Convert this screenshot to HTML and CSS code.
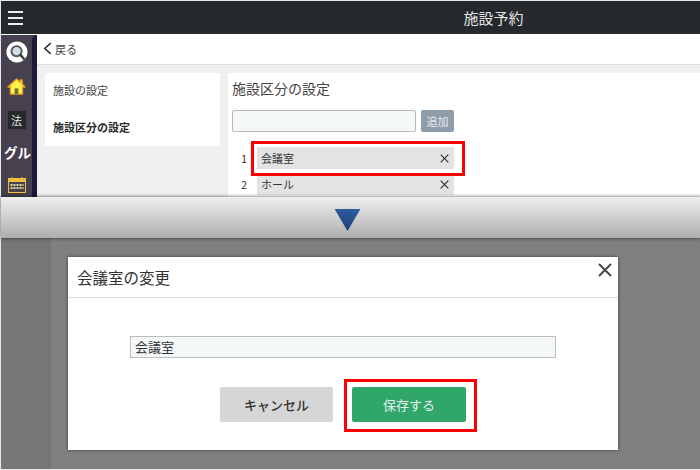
FILE: index.html
```html
<!DOCTYPE html>
<html lang="ja">
<head>
<meta charset="utf-8">
<title>施設予約</title>
<link rel="stylesheet" href="styles.css">
</head>
<body>
<div class="shot">
  <section class="app">
    <header class="topbar">
      <div class="burger"><span></span><span></span><span></span></div>
      <div class="title">施設予約</div>
    </header>
    <div class="app-body">
      <nav class="side">
        <div class="side-items">
          <svg class="ic-search" viewBox="0 0 26 26"><circle cx="13" cy="13" r="12.5" fill="#fff"/><circle cx="12.5" cy="12" r="6" fill="#cfe0ea" stroke="#555" stroke-width="2.2"/><path d="M17 16.5l4 4.5" stroke="#444" stroke-width="3" stroke-linecap="round"/></svg>
          <svg class="ic-home" viewBox="0 0 20 18"><path d="M10 1L1 9.500h2.600V17h12.800V9.500H19l-3-2.900V2h-2v2.700z" fill="#fff24d" stroke="#e9a21b" stroke-width="1.400" stroke-linejoin="round"/><rect x="8" y="11" width="4" height="6" fill="#7a6a3a"/></svg>
          <div class="ic-law">法</div>
          <div class="ic-group">グル</div>
          <svg class="ic-cal" viewBox="0 0 18 16"><rect x=".5" y="1.500" width="17" height="14" fill="#46404f" stroke="#efbd3f"/><rect x="1" y="2" width="16" height="3" fill="#efbd3f"/><path d="M4 0v3M14 0v3" stroke="#efbd3f"/><path d="M2.500 8h13M2.500 11h13" stroke="#e9d9a0" stroke-width="2" stroke-dasharray="2 1"/></svg>
        </div>
        <div class="side-edge"></div>
      </nav>
      <main class="main">
        <div class="backbar">
          <svg class="chev" viewBox="0 0 8 12"><path d="M7 1L1.500 6 7 11" fill="none" stroke="#333" stroke-width="1.500"/></svg>
          <span>戻る</span>
        </div>
        <div class="content">
          <aside class="menu">
            <div class="menu-item">施設の設定</div>
            <div class="menu-item strong">施設区分の設定</div>
          </aside>
          <div class="panel">
            <h2 class="panel-title">施設区分の設定</h2>
            <div class="add-row">
              <div class="field"></div>
              <div class="add-btn">追加</div>
            </div>
            <div class="row">
              <span class="num">1</span>
              <div class="chip"><span>会議室</span><svg class="x" viewBox="0 0 9 9"><path d="M.7.7l7.600 7.600M8.300.7L.7 8.300" stroke="#333" stroke-width="1.200" fill="none"/></svg></div>
            </div>
            <div class="row">
              <span class="num">2</span>
              <div class="chip"><span>ホール</span><svg class="x" viewBox="0 0 9 9"><path d="M.7.7l7.600 7.600M8.300.7L.7 8.300" stroke="#333" stroke-width="1.200" fill="none"/></svg></div>
            </div>
            <div class="mark mark-top"></div>
          </div>
        </div>
      </main>
    </div>
  </section>
  <div class="band">
    <svg class="arrow" viewBox="0 0 28 24"><defs><linearGradient id="g" x1="0" y1="0" x2="0" y2="1"><stop offset="0" stop-color="#2f5a9e"/><stop offset="1" stop-color="#1d3f78"/></linearGradient></defs><path d="M0.500 1h27L14 24z" fill="url(#g)"/></svg>
  </div>
  <section class="dim">
    <div class="dim-left"></div>
    <div class="dialog">
      <div class="dlg-head">
        <div class="dlg-title">会議室の変更</div>
        <svg class="dlg-close" viewBox="0 0 14 14"><path d="M1 1l12 12M13 1L1 13" stroke="#444" stroke-width="1.900" fill="none"/></svg>
      </div>
      <div class="dlg-body">
        <div class="dlg-input">会議室</div>
        <div class="dlg-actions">
          <div class="btn btn-cancel">キャンセル</div>
          <div class="btn btn-save">保存する</div>
          <div class="mark mark-save"></div>
        </div>
      </div>
    </div>
  </section>
</div>
</body>
</html>
```
FILE: styles.css
```css
* { box-sizing: border-box; }
html, body { margin: 0; padding: 0; background: #fff; }
body { font-family: "Noto Sans CJK JP", "Noto Sans", sans-serif; color: #333; }
.shot { width: 700px; height: 470px; display: flex; flex-direction: column; padding: 1px 0 1px 1px; background: #e8e8e8; overflow: hidden; }

.app { height: 196px; flex: none; display: flex; flex-direction: column; overflow: hidden; background: #f0f0f0; }
.topbar { height: 33px; flex: none; background: #25292b; display: flex; align-items: center; position: relative; }
.burger { width: 15px; margin-left: 7px; display: flex; flex-direction: column; gap: 4px; }
.burger span { height: 2px; background: #eee; }
.title { position: absolute; left: 0; right: 0; padding-left: 286px; text-align: center; color: #e4e4e4; font-size: 15px; }
.app-body { flex: 1; display: flex; min-height: 0; border-top: 1px solid #fff; }

.side { width: 36px; flex: none; background: #46404f; display: flex; justify-content: space-between; overflow: hidden; }
.side-items { width: 31px; flex: none; display: flex; flex-direction: column; align-items: center; }
.side-edge { width: 5px; background: #1a1b3c; border-radius: 5px 0 0 0; }
.ic-search { width: 22px; height: 22px; margin-top: 6px; margin-left: 1px; flex: none; }
.ic-home { width: 19px; height: 17px; margin-top: 15px; flex: none; }
.ic-law { width: 18px; height: 18px; margin-top: 16px; background: #25292b; color: #e6e6e6; font-size: 11px; line-height: 18px; text-align: center; flex: none; }
.ic-group { width: 31px; margin-top: 12px; padding-left: 3px; color: #fff; font-size: 13.500px; font-weight: 700; line-height: 22px; white-space: nowrap; flex: none; }
.ic-cal { width: 18px; height: 16px; margin-top: 14px; flex: none; }

.main { flex: 1; min-width: 0; display: flex; flex-direction: column; }
.backbar { height: 30px; flex: none; background: #fff; border-bottom: 1px solid #dcdde2; display: flex; align-items: center; padding: 0 0 2px 6px; gap: 3px; font-size: 11px; color: #444; }
.chev { width: 9px; height: 13px; }
.content { flex: 1; display: flex; gap: 8px; padding: 8px 0 0 8px; min-height: 0; }
.menu { width: 175px; height: 73px; flex: none; background: #fff; padding: 9px 8px 0; font-size: 11px; color: #444; }
.menu-item { height: 37px; line-height: 16px; }
.menu-item.strong { font-weight: 700; color: #2a2a2a; }
.panel { flex: 1; background: #fff; padding: 5px 4px 0; position: relative; }
.panel-title { margin: 0; font-size: 14px; font-weight: 400; line-height: 20px; color: #444; }
.add-row { display: flex; gap: 5px; margin-top: 12px; }
.field { width: 184px; height: 22px; background: #f4f7f8; border: 1px solid #b9b9b9; border-radius: 2px; }
.add-btn { width: 33px; height: 22px; background: #8f9dab; border-radius: 2px; color: #e7ebef; font-size: 11px; line-height: 22px; text-align: center; }
.row { display: flex; align-items: center; height: 22px; }
.row + .row { margin-top: 4px; }
.add-row + .row { margin-top: 15px; }
.num { width: 25px; flex: none; padding-right: 10px; text-align: right; font-size: 11px; color: #333; }
.chip { width: 197px; height: 22px; background: #e3e3e3; display: flex; justify-content: space-between; align-items: center; padding: 0 5px 0 4px; font-size: 11px; color: #333; }
.x { width: 9px; height: 9px; }
.mark { position: absolute; border: 3px solid #f00; pointer-events: none; }
.mark-top { left: 23px; top: 68px; width: 214px; height: 35px; }

.band { height: 41px; flex: none; margin-right: -1px; background: linear-gradient(#efefef, #aeaeae); display: flex; justify-content: center; align-items: flex-start; padding: 11px 8px 0 0; position: relative; z-index: 2; box-shadow: 0 -1px 3px rgba(0,0,0,.35), 0 1px 3px rgba(0,0,0,.35); }
.arrow { width: 27px; height: 23px; }

.dim { flex: 1; background: #808080; display: flex; padding: 19px 0 0 67px; position: relative; min-height: 0; }
.dim-left { position: absolute; left: 0; top: 0; bottom: 0; width: 50px; background: #767676; }
.dialog { width: 550px; height: 193px; background: #fff; position: relative; display: flex; flex-direction: column; box-shadow: 0 0 3px rgba(0,0,0,.6); }
.dlg-head { height: 41px; flex: none; border-bottom: 1px solid #dcdde5; display: flex; align-items: center; padding-left: 9px; position: relative; }
.dlg-title { font-size: 15.500px; color: #333; }
.dlg-close { position: absolute; right: 6px; top: 6px; width: 14px; height: 14px; }
.dlg-body { flex: 1; display: flex; flex-direction: column; align-items: center; padding-top: 38px; }
.dlg-input { width: 426px; height: 22px; background: #f4f7f8; border: 1px solid #bdbdbd; padding-left: 4px; font-size: 13px; line-height: 20px; color: #333; }
.dlg-actions { display: flex; gap: 19px; margin-top: 29px; position: relative; }
.btn { width: 114px; height: 35px; border-radius: 2px; font-size: 13px; line-height: 35px; text-align: center; }
.btn-cancel { width: 113px; background: #d6d6d6; color: #333; font-weight: 500; }
.btn-save { background: #31a66a; color: #e3f3ea; }
.mark-save { left: 124px; top: -8px; width: 133px; height: 53px; }
```
